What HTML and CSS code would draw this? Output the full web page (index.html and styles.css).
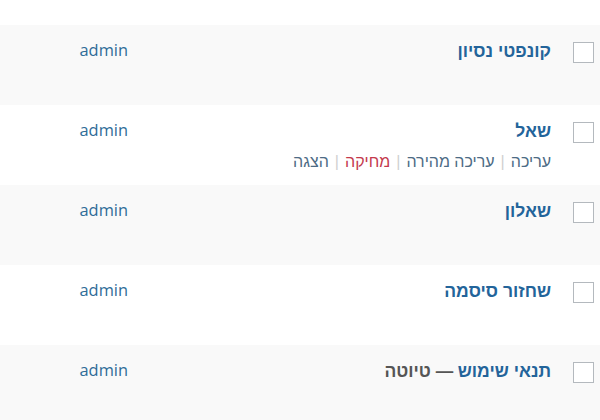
FILE: index.html
```html
<!DOCTYPE html>
<html lang="he" dir="rtl">
<head>
<meta charset="utf-8">
<link rel="stylesheet" href="styles.css">
</head>
<body>
<div class="list">
  <div class="row alt">
    <div class="cb"><span class="box"></span></div>
    <div class="title"><a class="name">קונפטי נסיון</a></div>
    <div class="author"><a>admin</a></div>
  </div>
  <div class="row">
    <div class="cb"><span class="box"></span></div>
    <div class="title">
      <a class="name">שאל</a>
      <div class="actions"><a>עריכה</a><span class="sep">|</span><a>עריכה מהירה</a><span class="sep">|</span><a class="del">מחיקה</a><span class="sep">|</span><a>הצגה</a></div>
    </div>
    <div class="author"><a>admin</a></div>
  </div>
  <div class="row alt">
    <div class="cb"><span class="box"></span></div>
    <div class="title"><a class="name">שאלון</a></div>
    <div class="author"><a>admin</a></div>
  </div>
  <div class="row">
    <div class="cb"><span class="box"></span></div>
    <div class="title"><a class="name">שחזור סיסמה</a></div>
    <div class="author"><a>admin</a></div>
  </div>
  <div class="row alt">
    <div class="cb"><span class="box"></span></div>
    <div class="title"><a class="name">תנאי שימוש</a> <span class="state">— טיוטה</span></div>
    <div class="author"><a>admin</a></div>
  </div>
</div>
</body>
</html>
```

FILE: styles.css
```css
html, body {
  margin: 0;
  padding: 0;
  background: #fff;
}
body {
  font-family: "Liberation Sans", "DejaVu Sans", Arial, sans-serif;
  overflow: hidden;
}
.list {
  padding-top: 25px;
}
.row {
  display: flex;
  flex-direction: row;
  height: 80px;
  background: #fff;
}
.row.alt {
  background: #f9f9f9;
}
.cb {
  width: 39px;
  flex: none;
  padding-top: 17px;
  box-sizing: border-box;
}
.box {
  display: block;
  width: 21px;
  height: 21px;
  box-sizing: border-box;
  border: 1px solid #b4b9be;
  background: #fff;
  margin-right: 6px;
}
.title {
  flex: 1;
  padding: 15px 10px 0 10px;
}
.name {
  font-size: 17.5px;
  font-weight: bold;
  color: #23649a;
  line-height: 22px;
}
.state {
  font-size: 17.5px;
  font-weight: bold;
  color: #555;
}
.actions {
  margin-top: 10px;
  font-size: 16px;
  line-height: 20px;
  color: #4a6f8a;
}
.actions a {
  color: #4d6b85;
}
.actions a.del {
  color: #c4394d;
}
.sep {
  color: #d0d0d0;
  margin: 0 6px;
}
.author {
  width: 138px;
  flex: none;
  box-sizing: border-box;
  padding: 14px 10px 0 0;
  font-family: "Open Sans", "Noto Sans", sans-serif;
  font-size: 16.4px;
  line-height: 22px;
  text-align: right;
}
.author a {
  color: #2f6c98;
}
```
